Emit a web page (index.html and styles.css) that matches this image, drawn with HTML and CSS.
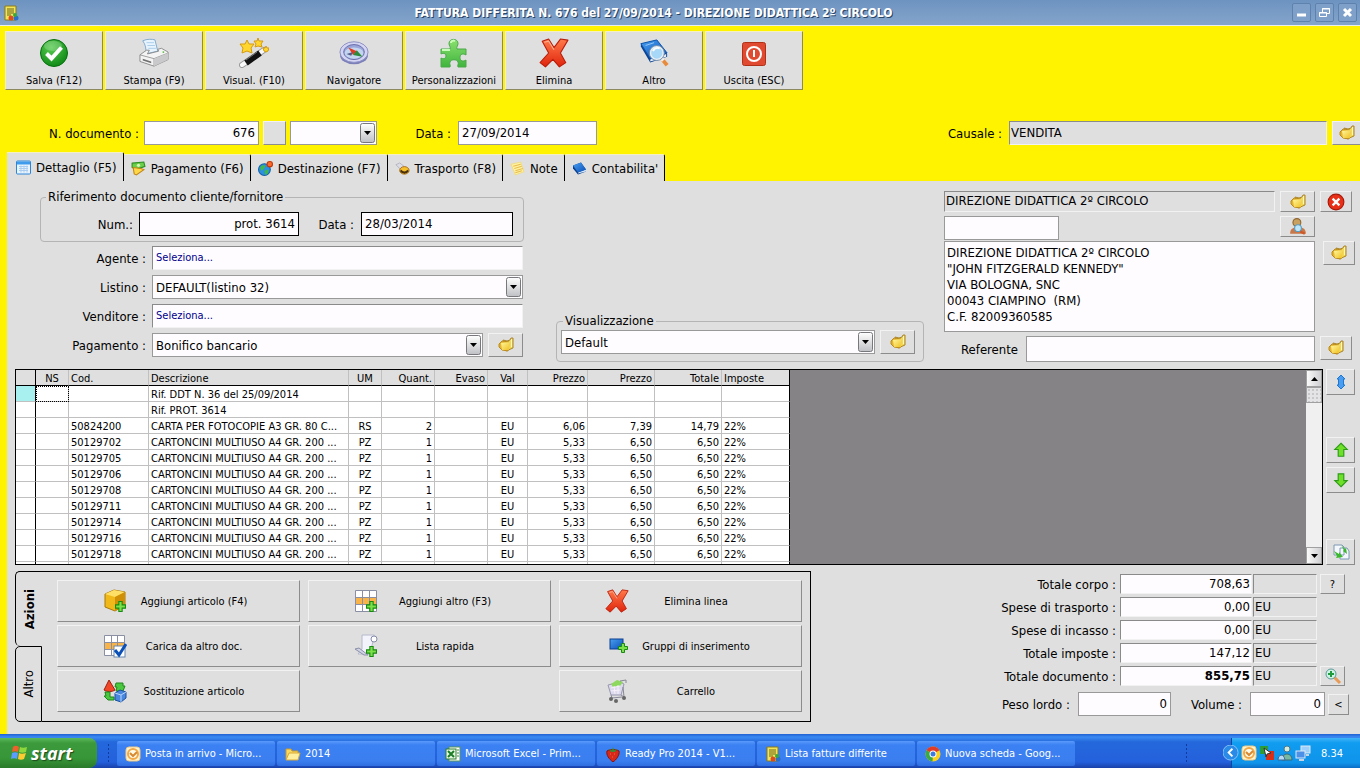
FILE: index.html
```
<!DOCTYPE html>
<html lang="it">
<head>
    <meta charset="UTF-8">
    <meta name="viewport" content="width=device-width, initial-scale=1.0">
    <title>Fattura differita</title>
    <link rel="stylesheet" href="styles.css">
</head>
<body>
    <!-- Icone condivise -->
    <svg class="sprite" aria-hidden="true">
        <defs>
            <linearGradient id="g-green" x1="0" y1="0" x2="0" y2="1"><stop offset="0" stop-color="#8be06f"/><stop offset="1" stop-color="#3fb53d"/></linearGradient>
            <linearGradient id="g-red" x1="0" y1="0" x2="0" y2="1"><stop offset="0" stop-color="#ff7a4a"/><stop offset="1" stop-color="#e0240c"/></linearGradient>
            <linearGradient id="g-yellow" x1="0" y1="0" x2="1" y2="1"><stop offset="0" stop-color="#fff7a0"/><stop offset="1" stop-color="#f0c020"/></linearGradient>
            <linearGradient id="g-blue" x1="0" y1="0" x2="1" y2="1"><stop offset="0" stop-color="#4aa0f0"/><stop offset="1" stop-color="#0a4fb8"/></linearGradient>
            <radialGradient id="g-ok" cx=".4" cy=".3" r=".8"><stop offset="0" stop-color="#58cc50"/><stop offset="1" stop-color="#07820f"/></radialGradient>
            <linearGradient id="g-drop" x1="0" y1="0" x2="0" y2="1"><stop offset="0" stop-color="#ffffff"/><stop offset="1" stop-color="#bfc0c4"/></linearGradient>
        </defs>
        <symbol id="i-plus" viewBox="0 0 10 10"><path d="M3.5.5h3v3h3v3h-3v3h-3v-3h-3v-3h3z" fill="#7be04a" stroke="#178a10"/></symbol>
        <symbol id="i-drop" viewBox="0 0 15 20"><rect x=".5" y=".5" width="14" height="19" rx="2" fill="url(#g-drop)" stroke="#77787c"/><path d="M4 8h7l-3.5 4z" fill="#000"/></symbol>
        <symbol id="i-folder" viewBox="0 0 18 18"><path d="M6 4l4 1 3-1 1-2 2 0 0 10-7 3z" fill="#f3d858" stroke="#a8842c"/><path d="M2 8l3-3 7 1-1 9-6-1-3-3z" fill="#e6b52c" stroke="#b98a20"/><path d="M4 7l9-1-1 8-7 0z" fill="url(#g-yellow)"/><path d="M14.500 3v8" stroke="#fff8b8"/></symbol>
        <symbol id="i-ok" viewBox="0 0 30 30"><circle cx="15" cy="15" r="13.5" fill="url(#g-ok)" stroke="#067010"/><ellipse cx="14" cy="8" rx="9" ry="5" fill="#fff" opacity=".2"/><path d="M7.500 15.500l5 5 10-11" fill="none" stroke="#fff" stroke-width="4"/></symbol>
        <symbol id="i-printer" viewBox="0 0 32 30"><path d="M4 2c4-2 10-2 13-1l3 12-13 3C8 11 7 6 4 2z" fill="#e8f4fd" stroke="#7fa8cc"/><path d="M8 4h8M9 7h8M10 10h8" stroke="#a7cbe8"/><path d="M1 17l7-5h3l-2 4 12-3-1-2 4-1 7 4v8l-15 7-15-5z" fill="#f4f4f4" stroke="#8a8a8a"/><path d="M1 17l15 4 15-6M16 21v8" fill="none" stroke="#9a9a9a"/><path d="M16 21l15-6v7l-15 7z" fill="#c9c9cc"/><path d="M4 21l9 3v2l-9-3z" fill="#707070"/><circle cx="26" cy="14" r="1" fill="#5abf3c"/></symbol>
        <symbol id="i-wand" viewBox="0 0 30 30"><path d="M3 27L25 12" stroke="#9a9a9a" stroke-width="6" stroke-linecap="round"/><path d="M3 27L25 12" stroke="#f8f8f8" stroke-width="4" stroke-linecap="round"/><path d="M7 25l14-10" stroke="#111" stroke-width="6"/><path d="M7 22l11-8" stroke="#777"/><g fill="#ffd62e" stroke="#d69a10"><path d="M8 2l2 4 5 0-3 4 1 5-5-2-5 2 1-5-3-4 5 0z"/><path d="M19 0l1 3 4 0-2 3 1 3-4-1-3 1 1-3-2-3 3 0z"/><path d="M27 8l1 2 2 0-1 3-2 1-2-1-1-3 2 0z"/></g></symbol>
        <symbol id="i-compass" viewBox="0 0 32 26"><ellipse cx="16" cy="15" rx="15" ry="10" fill="#7c80b8"/><ellipse cx="16" cy="12" rx="15" ry="11" fill="#d4d5f2" stroke="#8a8dc0"/><ellipse cx="16" cy="12" rx="11" ry="8" fill="#9aa6da" stroke="#666aa8"/><ellipse cx="16" cy="13" rx="10" ry="6" fill="#c4d5ef"/><path d="M10 7l9 4-4 4z" fill="#e03a20"/><path d="M19 10l6 7-10-2z" fill="#2b8a3a"/><path d="M8 14l7-2-2 4z" fill="#555b88"/></symbol>
        <symbol id="i-puzzle" viewBox="0 0 28 30"><path d="M1 11h9c1-2-1-3-1-5.500C9 0 18 0 18 5.500 18 8 16 9 17 11h9v6c-3-2-6-1-6 2.500S23 24 26 22v7h-8c-1-2 1-3 0-5-1-3-7-3-8 0-1 2 1 3 0 5H1v-9c2 1 5 1 5-2s-3-3-5-2z" fill="url(#g-green)" stroke="#4aa84a"/><path d="M11 5c0-2 2-3 4-2M2 12h8" fill="none" stroke="#c8ffb8" stroke-width="2"/></symbol>
        <symbol id="i-cross" viewBox="0 0 28 28"><path d="M3 3l6-2 5 8 6-8 7 1-7 12 5 9-6 4-6-7-7 7-5-4 8-9z" fill="url(#g-red)" stroke="#b81c08" stroke-linejoin="round"/><path d="M5 4l4-1 5 8" fill="none" stroke="#ffb090"/></symbol>
        <symbol id="i-booksearch" viewBox="0 0 32 30"><path d="M2 5l17-4 11 15v3l-18 6L2 8z" fill="#0a4090"/><path d="M12 22l17-6v3l-17 5z" fill="#eaf1fa"/><path d="M2 5l17-4 11 14-18 6z" fill="url(#g-blue)" stroke="#0c52ae"/><path d="M7 7l9-3" stroke="#9ccaf8"/><path d="M24 21l6 7" stroke="#e88a3a" stroke-width="4"/><path d="M24 21l2 2" stroke="#eee" stroke-width="4"/><circle cx="19" cy="15" r="7" fill="#a8d8f8" stroke="#e8eef4" stroke-width="2"/><circle cx="19" cy="15" r="8" fill="none" stroke="#6e8ba8"/><path d="M15 13c1-3 4-4 7-3" fill="none" stroke="#fff" stroke-width="2"/></symbol>
        <symbol id="i-power" viewBox="0 0 24 24"><rect x=".5" y=".5" width="23" height="23" rx="2" fill="#e04a30" stroke="#b03018"/><circle cx="12" cy="12" r="7" fill="none" stroke="#fff" stroke-width="2"/><path d="M12 8v7" stroke="#fff" stroke-width="2"/></symbol>
        <symbol id="i-window" viewBox="0 0 15 14"><rect x=".5" y=".5" width="14" height="13" rx="1" fill="#eaf4fd" stroke="#2a86d8"/><path d="M1 1h13v3H1z" fill="#3f9cec"/><path d="M3 6h9M3 8h9M3 10h9M5 5v7M8 5v7M11 5v7" stroke="#a9cdf0"/></symbol>
        <symbol id="i-money" viewBox="0 0 14 14"><path d="M1 2l11-1 1 4-8 3-4-2z" fill="#6ccf4a" stroke="#2c8f22"/><path d="M2 6l7 1 3 1-7 5-2-1z" fill="#ffd84a" stroke="#c28414"/><circle cx="7" cy="4" r="1.5" fill="#d9f7b8"/></symbol>
        <symbol id="i-globe" viewBox="0 0 14 14"><circle cx="6" cy="8" r="5.500" fill="#2c8fe0" stroke="#1560a8"/><path d="M2 6c2-3 4-2 5-1l-2 3-2 1zM6 9l4-1-1 4-2 1z" fill="#3fb84a"/><circle cx="11" cy="3" r="2.500" fill="#ff6a2a" stroke="#c0380c"/></symbol>
        <symbol id="i-truck" viewBox="0 0 16 14"><path d="M1 3l4-2 5 4-3 4z" fill="#dcdce4" stroke="#b4b4c0"/><ellipse cx="10" cy="9" rx="5" ry="4" fill="#f6c02c" stroke="#a86a10"/><path d="M6 9c2 3 6 3 8 0M9 11l2 1" stroke="#4a3008" stroke-width="2" fill="none"/></symbol>
        <symbol id="i-note" viewBox="0 0 14 14"><path d="M1 3l9-2 3 9-8 3z" fill="#fff3a0" stroke="#f0dc88"/><path d="M3 5l7-2M4 7l7-2M5 9l7-2M5 11l6-2" stroke="#e8bc50"/></symbol>
        <symbol id="i-book" viewBox="0 0 15 14"><path d="M1 4l8-3 5 7v2l-8 3-5-6z" fill="#0a4090"/><path d="M6 11l8-3v2l-8 2z" fill="#d4e4f8"/><path d="M1 4l8-3 5 7-8 3z" fill="url(#g-blue)"/></symbol>
        <symbol id="i-close" viewBox="0 0 16 16"><circle cx="8" cy="8" r="7" fill="#e83018" stroke="#a81808"/><path d="M5 5l6 6M11 5l-6 6" stroke="#fff" stroke-width="2"/></symbol>
        <symbol id="i-person" viewBox="0 0 16 16"><path d="M1 14c0-5 3-5 5-6h4c3 1 5 2 5 6z" fill="#c87848"/><circle cx="7" cy="4" r="3.500" fill="#c8a060" stroke="#906830"/><circle cx="8" cy="9" r="3" fill="#bfe6f8" stroke="#5a9cc0"/><path d="M10 12l4 2" stroke="#d05828" stroke-width="2"/></symbol>
        <symbol id="i-updown" viewBox="0 0 18 18"><path d="M9 2l4 4h-1.500v6H13l-4 4-4-4h1.500V6H5z" fill="#4a9cf0" stroke="#1c78d0"/></symbol>
        <symbol id="i-up" viewBox="0 0 16 16"><path d="M8 2l5.500 5.500h-3v6h-5v-6h-3z" fill="#6ee028" stroke="#2c9a18"/></symbol>
        <symbol id="i-down" viewBox="0 0 16 16"><path d="M8 14l5.500-5.500h-3v-6h-5v6h-3z" fill="#6ee028" stroke="#2c9a18"/></symbol>
        <symbol id="i-swap" viewBox="0 0 18 18"><path d="M2 2h8l2 2v8H2zM8 5h7l2 3v8H8z" fill="#f4f8fc" stroke="#7d98b4"/><path d="M2 8l5 3 0-2 4 5-7 1 1-2z" fill="#3cb82c"/><path d="M9 2l4 4 1-1 1 6-4-3 1-1z" fill="#3cb82c"/></symbol>
        <symbol id="i-box" viewBox="0 0 24 24"><path d="M2 5l9-4 11 2v13l-10 6L2 18z" fill="#f0b818" stroke="#a87808"/><path d="M2 5l10 3 10-5-11-2z" fill="#ffe066"/><path d="M12 8l10-5v13l-10 6z" fill="#cf9008"/><use href="#i-plus" x="12" y="12" width="11" height="11"/></symbol>
        <symbol id="i-gridplus" viewBox="0 0 24 24"><path d="M1.500 1.500h21v21h-21z" fill="#fff"/><path d="M2 8h20v8H2z" fill="#f8b448"/><path d="M1.500 1.500h21v21h-21zM8.500 1v21M15.500 1v21M1 8.500h22M1 15.500h22" fill="none" stroke="#8a8fa4"/><use href="#i-plus" x="12" y="12" width="11" height="11"/></symbol>
        <symbol id="i-gridcheck" viewBox="0 0 24 24"><path d="M1.500 1.500h20v20h-20z" fill="#fff"/><path d="M2 8h20v7H2z" fill="#f8b448"/><path d="M1.500 1.500h20v20h-20zM8.500 1v21M14.500 1v21M1 8.500h21M1 15.500h21" fill="none" stroke="#8a8fa4"/><rect x="11" y="12" width="11" height="11" fill="#fff" stroke="#6888b0"/><path d="M12 16l4 5 7-11" fill="none" stroke="#0b50b8" stroke-width="3"/></symbol>
        <symbol id="i-scroll" viewBox="0 0 24 24"><path d="M8 1h11c4 0 4 6 0 6l-3 13H4l4-5z" fill="#f2f3fb" stroke="#b4b8cc"/><circle cx="20" cy="5" r="3" fill="#fff" stroke="#858aa6"/><path d="M1 15l9 6h4l-9-7z" fill="#d0d3e4" stroke="#8c90a8"/><use href="#i-plus" x="12" y="12" width="11" height="11"/></symbol>
        <symbol id="i-group" viewBox="0 0 20 16"><rect x="1" y="1" width="13" height="10" fill="url(#g-blue)" stroke="#0a3f90"/><use href="#i-plus" x="9" y="5" width="10" height="10"/></symbol>
        <symbol id="i-shapes" viewBox="0 0 24 24"><path d="M6 1l6 10c-3 2-8 2-11 0z" fill="#f04828" stroke="#a02010"/><path d="M13 4l7 0 0 3 2 0-2 5-7 0 1-4-2 0z" fill="#4cc840" stroke="#1c8818"/><path d="M2 13h5v5l4 0v3l-6 0-4-4 2 0z" fill="#4cc840" stroke="#1c8818"/><path d="M12 14l5-3 6 2v6l-5 4-6-2z" fill="#4a88e0" stroke="#1a50a0"/><path d="M12 14l6 2 5-3M18 16v7" fill="none" stroke="#b8d4f8"/></symbol>
        <symbol id="i-cart" viewBox="0 0 20 24"><path d="M1 6l12-3 4 2-3 11H4z" fill="#dcdaec" stroke="#9a98b0"/><path d="M4 5l6-4 6 2-3 4-7 1z" fill="#8ed860"/><path d="M4 9l9-2M4 12l9-1M7 7l1 8M11 6v9" stroke="#f8f0fa"/><path d="M13 2l6-1v3M14 16l3 2-1-10M4 16l1 3 10-1" fill="none" stroke="#888898"/><circle cx="4" cy="20" r="2" fill="#666"/><circle cx="9" cy="22" r="2" fill="#666"/><circle cx="17" cy="19" r="2" fill="#666"/></symbol>
        <symbol id="i-zoomin" viewBox="0 0 18 18"><path d="M10 10l6 6" stroke="#e89a58" stroke-width="3"/><circle cx="7" cy="7" r="5" fill="#d0f2e4" stroke="#5a9a98"/><path d="M7 4v6M4 7h6" stroke="#1f9a3c" stroke-width="2"/></symbol>
        <symbol id="i-invoice" viewBox="0 0 16 16"><path d="M2 1h11v14H2z" fill="#f2e458" stroke="#8c7a18"/><path d="M4 4h7M4 6h7M4 8h7M4 10h4" stroke="#6b6420"/><circle cx="8" cy="13" r="2.500" fill="#e04a20"/><circle cx="13" cy="13" r="2.500" fill="#2a70c8"/><circle cx="12" cy="10" r="2" fill="#3aa838"/></symbol>
        <symbol id="i-flag" viewBox="0 0 18 18"><path d="M3 3c2-2 4-1 6 0L8 8C6 7 4 7 2 8z" fill="#f0602c"/><path d="M10 3c2 1 4 1 7 0l-1 5c-2 1-5 1-7 0z" fill="#8cd83c"/><path d="M2 9c2-1 4-1 6 0l-1 6c-2-1-4-1-6 0z" fill="#5a9cff"/><path d="M9 9c2 1 4 1 7 0l-2 6c-2 1-4 1-6 0z" fill="#fccc30"/></symbol>
        <symbol id="i-outlook" viewBox="0 0 16 16"><rect x="1" y="1" width="14" height="14" rx="3" fill="#fff4d0" stroke="#f0c880"/><circle cx="8" cy="8" r="5" fill="#fffbe8" stroke="#f0a848" stroke-width="2"/><path d="M5 7l3 3 4-4" fill="none" stroke="#d88830" stroke-width="2"/></symbol>
        <symbol id="i-dir" viewBox="0 0 16 14"><path d="M1 12V2h5l1 2h6v2" fill="#f8d860" stroke="#c89828"/><path d="M1 13l3-7h11l-2 7z" fill="#fff0a0" stroke="#d8a838"/></symbol>
        <symbol id="i-excel" viewBox="0 0 16 16"><rect x="4" y="1" width="11" height="14" fill="#fff" stroke="#58985a"/><path d="M12 4h2M12 7h2M12 10h2" stroke="#3c8c40"/><rect x="1" y="3" width="10" height="10" fill="#e8f6e4" stroke="#2c7c30"/><path d="M3 5l6 6M9 5l-6 6" stroke="#1c7c28" stroke-width="2"/></symbol>
        <symbol id="i-berry" viewBox="0 0 16 16"><path d="M2 5c3-2 9-2 12 0 1 4-3 9-6 11C4 13 1 9 2 5z" fill="#d82818" stroke="#8c1008"/><path d="M4 3l3 1 1-3 1 3 3-1-2 3H6z" fill="#3c8830"/><path d="M5 8h1M9 8h1M7 11h1" stroke="#f06850"/></symbol>
        <symbol id="i-chrome" viewBox="0 0 16 16"><circle cx="8" cy="8" r="7.500" fill="#fcd020"/><path d="M8 8L1.500 4.300A7.500 7.500 0 0 1 14.500 4.300z" fill="#e03c28"/><path d="M8 8L1.500 4.300A7.500 7.500 0 0 0 7.500 15.500z" fill="#3ca848"/><circle cx="8" cy="8" r="3.500" fill="#fff"/><circle cx="8" cy="8" r="2.500" fill="#3c7ce0"/></symbol>
        <symbol id="i-tray" viewBox="0 0 16 16"><path d="M1 1h8v8H1z" fill="#2c9c38"/><path d="M7 6h8v9H7z" fill="#d83018"/><path d="M5 3l7 5-4 1-1 3z" fill="#fff" stroke="#333"/></symbol>
        <symbol id="i-msn" viewBox="0 0 16 16"><circle cx="10" cy="4" r="3" fill="#d8ecd8" stroke="#487890"/><path d="M5 15c0-8 10-8 10 0z" fill="#78b8a0" stroke="#386878"/><path d="M1 15c0-6 6-7 7 0z" fill="#b8d8f0" stroke="#386898"/></symbol>
        <symbol id="i-net" viewBox="0 0 16 16"><rect x="6" y="1" width="9" height="7" fill="#9cd0fc" stroke="#dce8f4"/><rect x="1" y="6" width="9" height="7" fill="#4c90e8" stroke="#dce8f4"/><path d="M4 15h5M11 10h3" stroke="#c8d4e4" stroke-width="2"/></symbol>
    </svg>

    <header class="titlebar">
        <svg class="icon16"><use href="#i-invoice"/></svg>
        <h1>FATTURA DIFFERITA N. 676 del 27/09/2014 - DIREZIONE DIDATTICA 2º CIRCOLO</h1>
        <div class="win-buttons">
            <button type="button" aria-label="Riduci"><svg viewBox="0 0 17 17"><path d="M4 11h9" stroke="#fff" stroke-width="3"/></svg></button>
            <button type="button" aria-label="Ripristina"><svg viewBox="0 0 17 17"><path d="M6.500 8V4.500h7v5H11M3.500 8.500h7v4h-7zM6 5h8M3 9h8" fill="none" stroke="#fff"/></svg></button>
            <button type="button" aria-label="Chiudi"><svg viewBox="0 0 17 17"><path d="M5 5l7 7M12 5l-7 7" stroke="#fff" stroke-width="3"/></svg></button>
        </div>
    </header>

    <main class="app">
        <div class="toolbar">
            <button type="button"><svg><use href="#i-ok"/></svg>Salva (F12)</button>
            <button type="button"><svg><use href="#i-printer"/></svg>Stampa (F9)</button>
            <button type="button"><svg><use href="#i-wand"/></svg>Visual. (F10)</button>
            <button type="button"><svg><use href="#i-compass"/></svg>Navigatore</button>
            <button type="button"><svg><use href="#i-puzzle"/></svg>Personalizzazioni</button>
            <button type="button"><svg><use href="#i-cross"/></svg>Elimina</button>
            <button type="button"><svg><use href="#i-booksearch"/></svg>Altro</button>
            <button type="button"><svg class="small"><use href="#i-power"/></svg>Uscita (ESC)</button>
        </div>

        <div class="docbar">
            <label class="lbl-doc" for="numdoc">N. documento :</label>
            <input class="num numdoc" type="text" id="numdoc" value="676">
            <button type="button" class="btn square" aria-label="Numero"></button>
            <span class="select serie">
                <select aria-label="Serie"><option></option></select>
                <svg><use href="#i-drop"/></svg>
            </span>
            <label class="lbl-data" for="datadoc">Data :</label>
            <input class="datadoc" type="text" id="datadoc" value="27/09/2014">
            <label class="lbl-causale" for="causale">Causale :</label>
            <input class="causale sunken" type="text" id="causale" value="VENDITA" readonly>
            <button type="button" class="btn cut" aria-label="Apri causale"><svg><use href="#i-folder"/></svg></button>
        </div>

        <nav class="tabs">
            <button type="button" class="active"><svg><use href="#i-window"/></svg>Dettaglio (F5)</button>
            <button type="button"><svg><use href="#i-money"/></svg>Pagamento (F6)</button>
            <button type="button"><svg><use href="#i-globe"/></svg>Destinazione (F7)</button>
            <button type="button"><svg><use href="#i-truck"/></svg>Trasporto (F8)</button>
            <button type="button"><svg><use href="#i-note"/></svg>Note</button>
            <button type="button"><svg><use href="#i-book"/></svg>Contabilita'</button>
        </nav>

        <div class="panel">
            <section class="head">
                <div class="head-left">
                    <fieldset class="rif">
                        <legend>Riferimento documento cliente/fornitore</legend>
                        <label class="lbl-num" for="rifnum">Num.:</label>
                        <input class="num dark rifnum" type="text" id="rifnum" value="prot. 3614">
                        <label class="lbl-rifdata" for="rifdata">Data :</label>
                        <input class="dark rifdata" type="text" id="rifdata" value="28/03/2014">
                    </fieldset>
                    <div class="fields">
                        <label for="agente">Agente :</label>
                        <input class="pick" type="text" id="agente" value="Seleziona...">
                        <label for="listino">Listino :</label>
                        <span class="select">
                            <select id="listino"><option>DEFAULT(listino 32)</option></select>
                            <svg><use href="#i-drop"/></svg>
                        </span>
                        <label for="venditore">Venditore :</label>
                        <input class="pick" type="text" id="venditore" value="Seleziona...">
                        <label for="pagamento">Pagamento :</label>
                        <div class="with-btn">
                            <span class="select">
                                <select id="pagamento"><option>Bonifico bancario</option></select>
                                <svg><use href="#i-drop"/></svg>
                            </span>
                            <button type="button" class="btn" aria-label="Apri pagamento"><svg><use href="#i-folder"/></svg></button>
                        </div>
                    </div>
                </div>

                <fieldset class="vis">
                    <legend>Visualizzazione</legend>
                    <span class="select">
                        <select aria-label="Visualizzazione"><option>Default</option></select>
                        <svg><use href="#i-drop"/></svg>
                    </span>
                    <button type="button" class="btn" aria-label="Apri visualizzazione"><svg><use href="#i-folder"/></svg></button>
                </fieldset>

                <div class="cliente">
                    <div class="with-btn">
                        <input class="sunken ragione" type="text" aria-label="Cliente" value="DIREZIONE DIDATTICA 2º CIRCOLO" readonly>
                        <button type="button" class="btn low" aria-label="Apri cliente"><svg><use href="#i-folder"/></svg></button>
                    </div>
                    <button type="button" class="btn low side" aria-label="Rimuovi cliente"><svg><use href="#i-close"/></svg></button>
                    <div class="with-btn spread">
                        <input class="codice" type="text" aria-label="Codice cliente">
                        <button type="button" class="btn low" aria-label="Cerca cliente"><svg><use href="#i-person"/></svg></button>
                    </div>
                    <span></span>
                    <textarea rows="5" aria-label="Indirizzo">DIREZIONE DIDATTICA 2º CIRCOLO
"JOHN FITZGERALD KENNEDY"
VIA BOLOGNA, SNC
00043 CIAMPINO  (RM)
C.F. 82009360585</textarea>
                    <button type="button" class="btn side far" aria-label="Apri indirizzo"><svg><use href="#i-folder"/></svg></button>
                    <div class="referente">
                        <label for="referente">Referente</label>
                        <input type="text" id="referente">
                    </div>
                    <button type="button" class="btn side" aria-label="Apri referente"><svg><use href="#i-folder"/></svg></button>
                </div>
            </section>

            <section class="righe">
                <div class="griglia">
                    <table>
                        <colgroup>
                            <col class="c-sel"><col class="c-ns"><col class="c-cod"><col class="c-desc"><col class="c-um"><col class="c-qta"><col class="c-qta"><col class="c-val"><col class="c-prezzo"><col class="c-tot"><col class="c-tot"><col class="c-imp">
                        </colgroup>
                        <thead>
                            <tr><th></th><th class="c">NS</th><th>Cod.</th><th>Descrizione</th><th class="c">UM</th><th class="r">Quant.</th><th class="r">Evaso</th><th class="c">Val</th><th class="r">Prezzo</th><th class="r">Prezzo</th><th class="r">Totale</th><th>Imposte</th></tr>
                        </thead>
                        <tbody>
                            <tr><td class="current"></td><td class="focus"></td><td></td><td>Rif. DDT N. 36 del 25/09/2014</td><td></td><td></td><td></td><td></td><td></td><td></td><td></td><td></td></tr>
                            <tr><td></td><td></td><td></td><td>Rif. PROT. 3614</td><td></td><td></td><td></td><td></td><td></td><td></td><td></td><td></td></tr>
                            <tr><td></td><td></td><td>50824200</td><td>CARTA PER FOTOCOPIE A3 GR. 80 C...</td><td class="c">RS</td><td class="r">2</td><td></td><td class="c">EU</td><td class="r">6,06</td><td class="r">7,39</td><td class="r">14,79</td><td>22%</td></tr>
                            <tr><td></td><td></td><td>50129702</td><td>CARTONCINI MULTIUSO A4 GR. 200 ...</td><td class="c">PZ</td><td class="r">1</td><td></td><td class="c">EU</td><td class="r">5,33</td><td class="r">6,50</td><td class="r">6,50</td><td>22%</td></tr>
                            <tr><td></td><td></td><td>50129705</td><td>CARTONCINI MULTIUSO A4 GR. 200 ...</td><td class="c">PZ</td><td class="r">1</td><td></td><td class="c">EU</td><td class="r">5,33</td><td class="r">6,50</td><td class="r">6,50</td><td>22%</td></tr>
                            <tr><td></td><td></td><td>50129706</td><td>CARTONCINI MULTIUSO A4 GR. 200 ...</td><td class="c">PZ</td><td class="r">1</td><td></td><td class="c">EU</td><td class="r">5,33</td><td class="r">6,50</td><td class="r">6,50</td><td>22%</td></tr>
                            <tr><td></td><td></td><td>50129708</td><td>CARTONCINI MULTIUSO A4 GR. 200 ...</td><td class="c">PZ</td><td class="r">1</td><td></td><td class="c">EU</td><td class="r">5,33</td><td class="r">6,50</td><td class="r">6,50</td><td>22%</td></tr>
                            <tr><td></td><td></td><td>50129711</td><td>CARTONCINI MULTIUSO A4 GR. 200 ...</td><td class="c">PZ</td><td class="r">1</td><td></td><td class="c">EU</td><td class="r">5,33</td><td class="r">6,50</td><td class="r">6,50</td><td>22%</td></tr>
                            <tr><td></td><td></td><td>50129714</td><td>CARTONCINI MULTIUSO A4 GR. 200 ...</td><td class="c">PZ</td><td class="r">1</td><td></td><td class="c">EU</td><td class="r">5,33</td><td class="r">6,50</td><td class="r">6,50</td><td>22%</td></tr>
                            <tr><td></td><td></td><td>50129716</td><td>CARTONCINI MULTIUSO A4 GR. 200 ...</td><td class="c">PZ</td><td class="r">1</td><td></td><td class="c">EU</td><td class="r">5,33</td><td class="r">6,50</td><td class="r">6,50</td><td>22%</td></tr>
                            <tr><td></td><td></td><td>50129718</td><td>CARTONCINI MULTIUSO A4 GR. 200 ...</td><td class="c">PZ</td><td class="r">1</td><td></td><td class="c">EU</td><td class="r">5,33</td><td class="r">6,50</td><td class="r">6,50</td><td>22%</td></tr>
                            <tr class="last"><td></td><td></td><td></td><td></td><td></td><td></td><td></td><td></td><td></td><td></td><td></td><td></td></tr>
                        </tbody>
                    </table>
                    <div class="scroll">
                        <button type="button" aria-label="Su"><svg viewBox="0 0 9 5"><path d="M0 5h9L4.500 0z"/></svg></button>
                        <span class="thumb"></span>
                        <button type="button" class="giu" aria-label="Giù"><svg viewBox="0 0 9 5"><path d="M0 0h9L4.500 5z"/></svg></button>
                    </div>
                </div>
                <div class="sposta">
                    <button type="button" class="btn" aria-label="Espandi"><svg><use href="#i-updown"/></svg></button>
                    <div class="coppia">
                        <button type="button" class="btn" aria-label="Sposta su"><svg><use href="#i-up"/></svg></button>
                        <button type="button" class="btn" aria-label="Sposta giù"><svg><use href="#i-down"/></svg></button>
                    </div>
                    <button type="button" class="btn" aria-label="Copia righe"><svg><use href="#i-swap"/></svg></button>
                </div>
            </section>

            <section class="foot">
                <div class="azioni">
                    <div class="vtabs">
                        <button type="button" class="active"><span>Azioni</span></button>
                        <button type="button"><span>Altro</span></button>
                    </div>
                    <div class="comandi">
                        <button type="button"><svg><use href="#i-box"/></svg><span>Aggiungi articolo (F4)</span></button>
                        <button type="button"><svg><use href="#i-gridplus"/></svg><span>Aggiungi altro (F3)</span></button>
                        <button type="button"><svg><use href="#i-cross"/></svg><span>Elimina linea</span></button>
                        <button type="button"><svg><use href="#i-gridcheck"/></svg><span>Carica da altro doc.</span></button>
                        <button type="button"><svg><use href="#i-scroll"/></svg><span>Lista rapida</span></button>
                        <button type="button"><svg class="small"><use href="#i-group"/></svg><span>Gruppi di inserimento</span></button>
                        <button type="button"><svg><use href="#i-shapes"/></svg><span>Sostituzione articolo</span></button>
                        <button type="button" class="carrello"><svg><use href="#i-cart"/></svg><span>Carrello</span></button>
                    </div>
                </div>

                <div class="riepilogo">
                    <div class="totali">
                        <label for="t1">Totale corpo :</label>
                        <input class="num" type="text" id="t1" value="708,63">
                        <input class="sunken" type="text" aria-label="Valuta" readonly>
                        <button type="button" class="btn">?</button>
                        <label for="t2">Spese di trasporto :</label>
                        <input class="num" type="text" id="t2" value="0,00">
                        <input class="sunken" type="text" aria-label="Valuta trasporto" value="EU" readonly>
                        <span></span>
                        <label for="t3">Spese di incasso :</label>
                        <input class="num" type="text" id="t3" value="0,00">
                        <input class="sunken" type="text" aria-label="Valuta incasso" value="EU" readonly>
                        <span></span>
                        <label for="t4">Totale imposte :</label>
                        <input class="num" type="text" id="t4" value="147,12">
                        <input class="sunken" type="text" aria-label="Valuta imposte" value="EU" readonly>
                        <span></span>
                        <label for="t5">Totale documento :</label>
                        <input class="num bold" type="text" id="t5" value="855,75">
                        <input class="sunken" type="text" aria-label="Valuta documento" value="EU" readonly>
                        <button type="button" class="btn" aria-label="Dettaglio totale"><svg><use href="#i-zoomin"/></svg></button>
                    </div>
                    <div class="pesi">
                        <label for="peso">Peso lordo :</label>
                        <input class="num peso" type="text" id="peso" value="0">
                        <label class="lbl-volume" for="volume">Volume :</label>
                        <input class="num volume" type="text" id="volume" value="0">
                        <button type="button" class="btn">&lt;</button>
                    </div>
                </div>
            </section>
        </div>
    </main>

    <footer class="taskbar">
        <button type="button" class="start"><svg><use href="#i-flag"/></svg>start</button>
        <span class="grip"></span>
        <div class="tasks">
            <button type="button"><svg><use href="#i-outlook"/></svg>Posta in arrivo - Micro...</button>
            <button type="button"><svg><use href="#i-dir"/></svg>2014</button>
            <button type="button"><svg><use href="#i-excel"/></svg>Microsoft Excel - Prim...</button>
            <button type="button"><svg><use href="#i-berry"/></svg>Ready Pro 2014 - V1...</button>
            <button type="button"><svg><use href="#i-invoice"/></svg>Lista fatture differite</button>
            <button type="button"><svg><use href="#i-chrome"/></svg>Nuova scheda - Goog...</button>
        </div>
        <span class="grip right"></span>
        <div class="tray">
            <button type="button" class="chevron" aria-label="Mostra icone"><svg viewBox="0 0 17 17"><circle cx="8" cy="8" r="8" fill="#2a8ae8" stroke="#8cc4f8"/><path d="M10 4L6 8l4 4" fill="none" stroke="#fff" stroke-width="2"/></svg></button>
            <svg><use href="#i-outlook"/></svg>
            <svg><use href="#i-tray"/></svg>
            <svg><use href="#i-msn"/></svg>
            <svg><use href="#i-net"/></svg>
            <time>8.34</time>
        </div>
    </footer>
</body>
</html>
```

FILE: styles.css
```
:root {
    --grigio: #dfdfdf;
    --giallo: #fff300;
    --campo: #fffcff;
    --ombra: #8c8c8c;
    --luce: #f2f2f2;
}

* {
    box-sizing: border-box;
}

body {
    margin: 0;
    min-height: 100vh;
    display: flex;
    flex-direction: column;
    overflow-x: hidden;
    font-family: "DejaVu Sans Condensed", "DejaVu Sans", sans-serif;
    font-size: 13px;
    color: #000;
    background-color: var(--giallo);
}

button, input, select, textarea {
    font: inherit;
    color: inherit;
    margin: 0;
    border-radius: 0;
}

button {
    padding: 0;
    font-size: 11px;
}

svg {
    display: block;
    flex: none;
}

.sprite {
    position: absolute;
    width: 0;
    height: 0;
}

/* Barra del titolo */
.titlebar {
    display: flex;
    align-items: center;
    height: 26px;
    padding: 0 3px;
    background: linear-gradient(#6d93c0, #84a5cb);
    border-bottom: 1px solid #e8eef0;
}

.icon16 {
    width: 16px;
    height: 16px;
}

.titlebar h1 {
    flex: 1;
    margin: 0 4px 0 0;
    font-size: 12px;
    font-weight: bold;
    text-align: center;
    color: #fff;
    text-shadow: 1px 1px 0 #2a4566;
}

.win-buttons {
    display: flex;
    gap: 4px;
}

.win-buttons button {
    width: 19px;
    height: 19px;
    background-color: #7fa0c8;
    border: 1px solid #5d82ae;
    border-radius: 2px;
}

/* Barra strumenti */
.app {
    flex: 1;
    display: flex;
    flex-direction: column;
}

.toolbar {
    display: flex;
    gap: 2px;
    padding: 5px 5px 0;
}

.toolbar button {
    width: 98px;
    height: 59px;
    display: flex;
    flex-direction: column;
    align-items: center;
    justify-content: space-between;
    padding: 6px 0 2px;
    background-color: var(--grigio);
    border: 1px solid #f4f0c0;
    border-right-color: #8c8860;
    border-bottom-color: #8c8860;
    white-space: nowrap;
}

.toolbar svg {
    width: 30px;
    height: 30px;
}

.toolbar svg.small {
    width: 24px;
    height: 24px;
    margin: 4px 0 2px;
}

input, select, textarea {
    height: 24px;
    min-width: 0;
    padding: 0 3px 2px;
    background-color: var(--campo);
    border: 1px solid #999;
    outline: none;
}

.num {
    text-align: right;
}

.btn {
    display: flex;
    align-items: center;
    justify-content: center;
    flex: none;
    width: 35px;
    height: 24px;
    background-color: var(--grigio);
    border: 1px solid var(--luce);
    border-right-color: var(--ombra);
    border-bottom-color: var(--ombra);
}

.btn svg {
    width: 18px;
    height: 18px;
}

.sunken {
    background-color: var(--grigio);
    border: 1px solid var(--luce);
    border-top-color: #8a8a8a;
    border-left-color: #8a8a8a;
    padding: 0 1px 2px;
}

.select {
    position: relative;
    display: flex;
    flex: 1;
    min-width: 0;
}

.select select {
    appearance: none;
    width: 100%;
    padding: 0 20px 0 3px;
}

.select svg {
    position: absolute;
    right: 2px;
    top: 2px;
    width: 15px;
    height: 20px;
    pointer-events: none;
}

.docbar {
    display: flex;
    align-items: center;
    padding: 31px 0 7px;
}

.docbar label {
    flex: none;
    text-align: right;
}

.lbl-doc {
    width: 139px;
    margin-right: 5px;
}

.numdoc {
    width: 115px;
    margin-right: 4px;
}

.btn.square {
    width: 23px;
    margin-right: 4px;
}

.serie {
    flex: none;
    width: 87px;
}

.lbl-data {
    width: 74px;
    margin-right: 7px;
}

.datadoc {
    width: 139px;
}

.docbar .lbl-causale {
    margin: 0 7px 0 auto;
}

.causale {
    width: 318px;
    margin-right: 5px;
}

.btn.cut {
    width: 28px;
    border-right: none;
}

/* Schede */
.tabs {
    display: flex;
    align-items: flex-end;
    padding-left: 7px;
}

.tabs button {
    display: flex;
    align-items: center;
    gap: 5px;
    height: 27px;
    padding: 0 6px 0 7px;
    font-size: 13px;
    background-color: var(--grigio);
    border: none;
    border-top: 1px solid #f4f0c0;
    border-right: 1px solid #000;
    border-top-right-radius: 2px;
    white-space: nowrap;
}

.tabs button.active {
    height: 29px;
    padding-left: 9px;
}

.tabs svg {
    width: 15px;
    height: 15px;
}

.panel {
    flex: 1;
    margin-left: 7px;
    padding: 9px 5px 12px 8px;
    background-color: var(--grigio);
}

.head {
    display: flex;
    align-items: flex-start;
}

.head-left {
    width: 484px;
    margin-left: 25px;
}

fieldset {
    display: flex;
    align-items: center;
    min-width: 0;
    margin: 0;
    border: 1px solid #b4b4b4;
    border-radius: 4px;
}

legend {
    padding: 0 2px;
    line-height: 14px;
}

.rif {
    padding: 8px 10px 5px 5px;
}

.dark {
    border-color: #000;
}

.lbl-num {
    width: 87px;
    margin-right: 6px;
    text-align: right;
}

.rifnum {
    width: 160px;
}

.lbl-rifdata {
    flex: 1;
    margin-right: 7px;
    text-align: right;
}

.rifdata {
    width: 152px;
}

.fields {
    display: grid;
    grid-template-columns: 106px 1fr;
    gap: 5px 6px;
    align-items: center;
    padding: 4px 1px 0 0;
}

.fields label {
    text-align: right;
}

.pick {
    font-size: 11px;
    color: #00008c;
    border-color: #8a8a8a var(--luce) var(--luce) #8a8a8a;
}

.with-btn {
    display: flex;
    gap: 5px;
}

.vis {
    align-self: flex-end;
    gap: 5px;
    width: 368px;
    margin-left: 32px;
    padding: 2px 8px 7px 4px;
}

.vis legend {
    margin-left: 2px;
}

.cliente {
    display: grid;
    grid-template-columns: 371px 35px;
    gap: 4px 5px;
    margin-left: auto;
    padding-top: 1px;
}

.low {
    height: 21px;
}

.side {
    width: 32px;
}

.far {
    justify-self: end;
}

.ragione {
    flex: 1;
    height: 21px;
}

.spread {
    justify-content: space-between;
}

.codice {
    width: 115px;
}

.cliente textarea {
    height: auto;
    margin-top: -3px;
    padding: 3px 2px 6px;
    line-height: 16px;
    resize: none;
    overflow: hidden;
}

.cliente .far {
    margin-top: -3px;
}

.referente {
    display: flex;
    align-items: center;
    justify-content: flex-end;
    gap: 8px;
}

.referente input {
    width: 289px;
    height: 26px;
}

/* Griglia righe */
.righe {
    display: flex;
    gap: 3px;
    margin-top: 7px;
}

.griglia {
    flex: 1;
    display: flex;
    justify-content: space-between;
    border: 1px solid #000;
    background-color: #858385;
}

table {
    table-layout: fixed;
    width: 774px;
    border-collapse: separate;
    border-spacing: 0;
    font-size: 11px;
    background-color: #fff;
}

th, td {
    height: 16px;
    padding: 2px 2px 0;
    line-height: 13px;
    font-weight: normal;
    text-align: left;
    white-space: nowrap;
    overflow: hidden;
    border-right: 1px solid #c0c0c0;
    border-bottom: 1px solid #c0c0c0;
}

th {
    background-color: var(--grigio);
    border-bottom-color: #000;
}

th:first-child, td:first-child,
th:last-child, td:last-child {
    border-right-color: #000;
}

.c {
    text-align: center;
}

.r {
    text-align: right;
}

td.current {
    background-color: #a8f0f0;
}

td.focus {
    outline: 1px dotted #000;
    outline-offset: -1px;
}

.last td {
    height: 2px;
    border-bottom: none;
}

.c-sel { width: 20px; }
.c-ns, .c-um { width: 33px; }
.c-cod { width: 80px; }
.c-desc { width: 200px; }
.c-qta { width: 53px; }
.c-val { width: 40px; }
.c-prezzo { width: 60px; }
.c-tot { width: 67px; }
.c-imp { width: 68px; }

.scroll {
    display: flex;
    flex-direction: column;
    width: 16px;
    background-color: #f0f0f0;
}

.scroll button, .thumb {
    display: flex;
    align-items: center;
    justify-content: center;
    height: 17px;
    background: linear-gradient(90deg, #fafafa, #cfcfd2);
    border: 1px solid #a0a0a0;
}

.scroll button svg {
    width: 7px;
    height: 4px;
}

.thumb {
    height: 16px;
    background: radial-gradient(#c8c8c8 1px, #e4e4e6 1px) 0 0 / 4px 4px;
}

.scroll .giu {
    margin-top: auto;
}

.sposta {
    display: flex;
    flex-direction: column;
    justify-content: space-between;
}

.sposta .btn {
    width: 29px;
    height: 26px;
}

.coppia {
    display: flex;
    flex-direction: column;
    gap: 4px;
    padding-bottom: 5px;
}

/* Azioni e totali */
.foot {
    display: flex;
    justify-content: space-between;
    margin-top: 6px;
}

.azioni {
    display: flex;
}

.vtabs {
    display: flex;
    flex-direction: column;
    width: 27px;
}

.vtabs button {
    flex: 1;
    display: flex;
    align-items: center;
    justify-content: center;
    font-size: 13px;
    background-color: var(--grigio);
    border: 1px solid #000;
    border-radius: 5px 0 0 5px;
}

.vtabs button.active {
    font-weight: bold;
    border-right: none;
    border-bottom: none;
}

.vtabs span {
    writing-mode: vertical-rl;
    rotate: 180deg;
}

.comandi {
    display: grid;
    grid-template-columns: repeat(3, 243px);
    gap: 3px 8px;
    padding: 8px 8px 9px 15px;
    border: 1px solid #000;
    border-left: none;
}

.comandi button {
    display: grid;
    grid-template-columns: 24px 1fr;
    align-items: center;
    gap: 10px;
    height: 42px;
    padding: 0 48px 0 45px;
    background-color: var(--grigio);
    border: 1px solid var(--luce);
    border-right-color: var(--ombra);
    border-bottom-color: var(--ombra);
}

.comandi svg {
    width: 24px;
    height: 24px;
}

.comandi svg.small {
    width: 20px;
    height: 16px;
    justify-self: end;
}

.comandi .carrello {
    grid-column: 3;
}

.riepilogo {
    padding: 3px 6px 0 0;
}

.totali {
    display: grid;
    grid-template-columns: 1fr 132px 64px 27px;
    gap: 3px 1px;
    align-items: center;
    padding-right: 4px;
}

.totali label {
    text-align: right;
    padding: 0 3px 0 0;
}

.totali input {
    height: 20px;
    padding: 0 1px 2px;
    border: 1px solid var(--luce);
    border-top-color: #8a8a8a;
    border-left-color: #8a8a8a;
}

.totali .btn {
    width: 25px;
    height: 20px;
    justify-self: end;
}

.totali .bold {
    font-weight: bold;
}

.pesi {
    display: flex;
    align-items: center;
    justify-content: flex-end;
    margin-top: 6px;
}

.peso {
    width: 93px;
    margin-left: 8px;
}

.lbl-volume {
    margin-left: 20px;
}

.volume {
    width: 75px;
    margin: 0 3px 0 8px;
}

.pesi .btn {
    width: 21px;
    height: 21px;
}

/* Barra delle applicazioni */
.taskbar {
    display: flex;
    align-items: stretch;
    height: 34px;
    background: linear-gradient(#1f5fd0, #3a8af2 3px, #2468dc 8px, #2460dc 28px, #1941a8);
    color: #fff;
    font-size: 11px;
}

.start {
    display: flex;
    align-items: center;
    gap: 3px;
    width: 97px;
    margin-top: 4px;
    padding-left: 10px;
    font-size: 18px;
    font-family: "Open Sans", sans-serif;
    font-weight: bold;
    font-style: italic;
    text-shadow: 1px 1px 1px #1c4a1c;
    background: linear-gradient(#5cb85c, #3c9a3c 5px, #379637 20px, #2a7a2a);
    border: none;
    border-radius: 0 8px 8px 0;
}

.start svg {
    width: 18px;
    height: 18px;
}

.grip {
    width: 5px;
    margin: 9px 6px 4px 9px;
    background: radial-gradient(#123a9c 1px, transparent 1px) 0 0 / 5px 4px;
}

.grip.right {
    margin-left: auto;
    margin-right: 42px;
}

.tasks {
    display: flex;
    gap: 2px;
    padding: 7px 0 2px;
}

.tasks button {
    display: flex;
    align-items: center;
    gap: 4px;
    width: 158px;
    padding-left: 8px;
    background: linear-gradient(#5a9afc, #3c81f3 4px, #3a7ef0 20px, #2f6ee0);
    border: none;
    border-radius: 2px;
    white-space: nowrap;
}

.tasks svg, .tray svg {
    width: 16px;
    height: 16px;
}

.tray {
    display: flex;
    align-items: center;
    gap: 2px;
    width: 129px;
    margin-top: 4px;
    background: linear-gradient(#3fb4f8, #109cf0 5px, #0f94ea 25px, #0c6cc4);
    border-left: 1px solid #0a4a9c;
}

.chevron {
    margin-left: -9px;
    border: none;
    background: none;
}

.tray time {
    margin-left: 8px;
}
```
